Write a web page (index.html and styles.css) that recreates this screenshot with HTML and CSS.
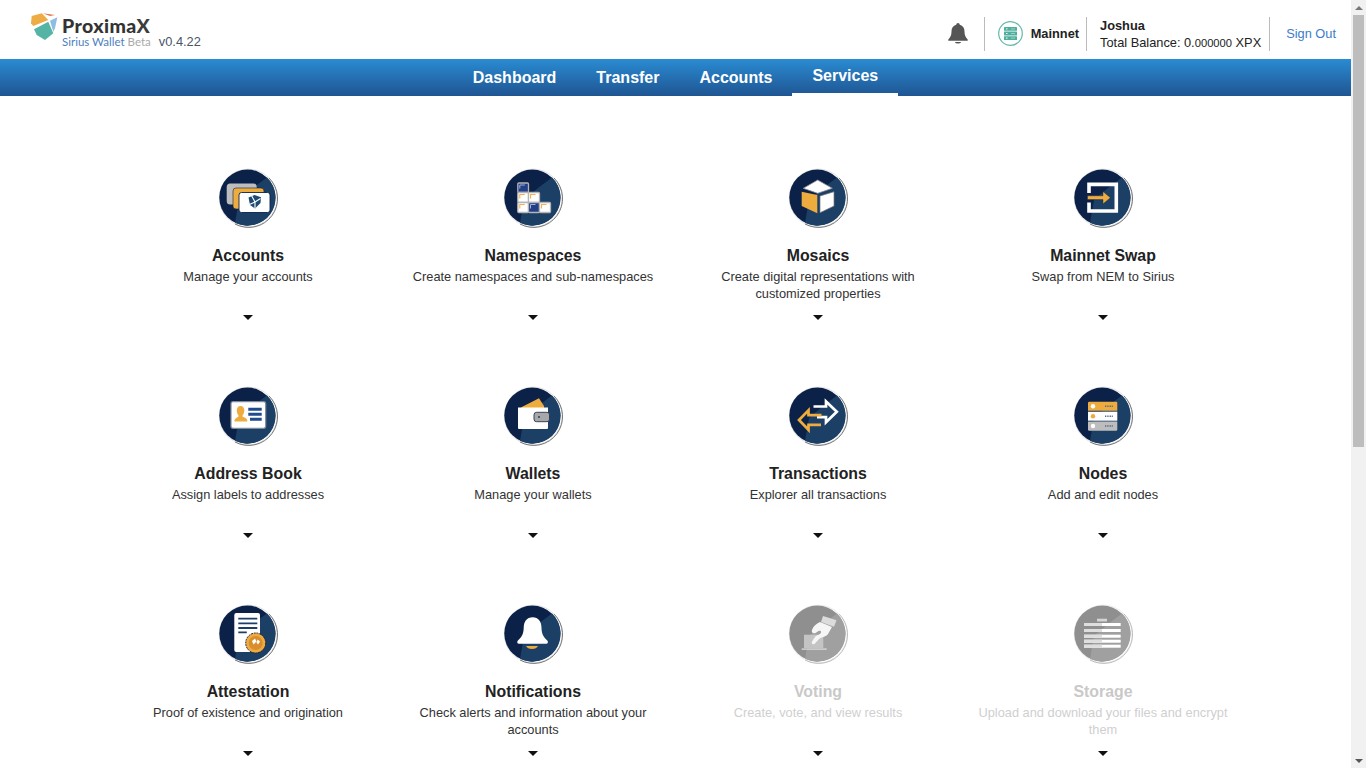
FILE: index.html
```html
<!DOCTYPE html>
<html lang="en">
<head>
<meta charset="utf-8">
<title>ProximaX Sirius Wallet</title>
<link rel="stylesheet" href="styles.css">
</head>
<body>
<svg class="defs" aria-hidden="true">
  <symbol id="b" viewBox="-1 -1 60 60">
    <circle cx="29.200" cy="29" r="28.900" fill="#fff" stroke="#cfcfcf" stroke-width=".6"/>
    <path d="M50 9A28.900 28.900 0 0 1 16 55" fill="none" stroke="#666" stroke-width=".9"/>
    <circle cx="28.300" cy="28.500" r="28" fill="#0c2148"/>
    <path d="M16 53.700L20 31Q33 19 48 8.500A28 28 0 0 1 16 53.700Z" fill="#1c3f66"/>
  </symbol>
  <symbol id="g" viewBox="-1 -1 60 60">
    <circle cx="29.200" cy="29" r="28.900" fill="#fff" stroke="#dedede" stroke-width=".6"/>
    <path d="M50 9A28.900 28.900 0 0 1 16 55" fill="none" stroke="#b5b5b5" stroke-width=".9"/>
    <circle cx="28.300" cy="28.500" r="28" fill="#8f8f8f"/>
    <path d="M16 53.700L20 31Q33 19 48 8.500A28 28 0 0 1 16 53.700Z" fill="#a0a0a0"/>
  </symbol>
</svg>

<header class="top">
  <div class="brand">
    <svg class="logo" viewBox="0 0 28 28">
      <path d="M1.700 4L11.700 1.300 18.300 8 3.300 14 1 11.300z" fill="#eeac45"/>
      <path d="M12.700 1.300L25 3l-5 1z" fill="#e4734a"/>
      <path d="M20 8.700L27.300 5.300 25 16.300 23.300 19.700z" fill="#8fbce2"/>
      <path d="M4 17.300L18.300 9.700 23.300 21.300 15 28 6.700 23z" fill="#55b5a5"/>
    </svg>
    <div class="wordmark">
      <div class="name">Proxima<span class="name-x">X</span></div>
      <div class="sub"><span class="sub-blue">Sirius Wallet</span> <span class="sub-grey">Beta</span></div>
    </div>
    <span class="version">v0.4.22</span>
  </div>
  <div class="tools">
    <div class="tool tool-bell">
      <svg class="bell" viewBox="0 0 20 21"><path d="M10 0a1.800 1.800 0 0 1 1.800 1.700C15 2.500 16.500 5 16.500 8.500c0 4 1 5.500 3.200 8v1.300H.3v-1.300c2.200-2.500 3.200-4 3.200-8C3.500 5 5 2.500 8.200 1.700A1.800 1.800 0 0 1 10 0z" fill="#555"/><path d="M6.800 19h6.400a3.300 2 0 0 1-6.400 0z" fill="#555"/></svg>
    </div>
    <div class="tool tool-net">
      <svg class="net" viewBox="0 0 25 25">
        <circle cx="12.500" cy="12.500" r="11.800" fill="#fff" stroke="#62b9a9" stroke-width="1.200"/>
        <rect x="6" y="6" width="13" height="3.800" rx=".5" fill="#4fae9d"/>
        <rect x="6" y="10.600" width="13" height="3.800" rx=".5" fill="#4fae9d"/>
        <rect x="6" y="15.200" width="13" height="3.800" rx=".5" fill="#4fae9d"/>
        <path d="M8 7.900h1.500M8 12.500h1.500M8 17.100h1.500" stroke="#fff"/>
        <path d="M13 7.900h4M13 12.500h4M13 17.100h4" stroke="#a8dcd2" stroke-width=".8"/>
      </svg>
      <span class="net-name">Mainnet</span>
    </div>
    <div class="tool tool-acct">
      <div class="acct-name">Joshua</div>
      <div class="acct-bal">Total Balance: 0.<span class="dec">000000</span> XPX</div>
    </div>
    <div class="tool tool-out"><a class="signout" href="#">Sign Out</a></div>
  </div>
</header>

<nav class="nav">
  <a class="nav-item" href="#">Dashboard</a>
  <a class="nav-item" href="#">Transfer</a>
  <a class="nav-item" href="#">Accounts</a>
  <a class="nav-item nav-active" href="#">Services</a>
</nav>

<main class="grid">
  <section class="card">
    <svg class="ic" viewBox="-1 -1 60 60"><use href="#b" x="-1" y="-1" width="60" height="60"/>
      <rect x="7.700" y="14.500" width="30" height="21" rx="3.500" fill="#bdbdbd"/>
      <rect x="14" y="19" width="31" height="21" rx="3" fill="#eeac3f" stroke="#0c2148" stroke-width=".6"/>
      <rect x="20" y="23.500" width="31" height="20" rx="2.500" fill="#fff" stroke="#0c2148" stroke-width=".9"/>
      <path d="M29.500 28.500l6-2.500 6.500 2.300-.5 5.700-5.500 5.500-5-3.500z" fill="#1c4a72"/>
      <path d="M32.500 26.500l3.500 6.500-5.500 2.500M36 33l5.500-3.500M36 33v6" stroke="#fff" stroke-width="1.100" fill="none"/>
    </svg>
    <h2 class="title">Accounts</h2>
    <p class="desc">Manage your accounts</p>
    <span class="caret"></span>
  </section>

  <section class="card">
    <svg class="ic" viewBox="-1 -1 60 60"><use href="#b" x="-1" y="-1" width="60" height="60"/>
      <g stroke="#b4b4b4" stroke-width="1.300">
        <rect x="13.800" y="14" width="10.700" height="9.500" rx="1" fill="#233f86"/>
        <rect x="13.800" y="23.500" width="10.700" height="10" rx="1" fill="#fff"/>
        <rect x="24.500" y="23.500" width="11" height="10" rx="1" fill="#fff"/>
        <rect x="13.800" y="33.500" width="10.700" height="10" rx="1" fill="#fff"/>
        <rect x="24.500" y="33.500" width="11" height="10" rx="1" fill="#233f86"/>
        <rect x="35.500" y="33.500" width="11" height="10" rx="1" fill="#fff"/>
      </g>
      <path d="M15.800 29.500v-4h5M26.500 29.500v-4h5M15.800 39.500v-4h5M37.500 39.500v-4h5" stroke="#f3b04c" stroke-width="1.100" fill="none"/>
      <path d="M15.800 19.500v-3.500h5M26.500 39.500v-4h5" stroke="#9db2dc" stroke-width="1" fill="none"/>
    </svg>
    <h2 class="title">Namespaces</h2>
    <p class="desc">Create namespaces and sub-namespaces</p>
    <span class="caret"></span>
  </section>

  <section class="card">
    <svg class="ic" viewBox="-1 -1 60 60"><use href="#b" x="-1" y="-1" width="60" height="60"/>
      <path d="M28.700 11l14.600 8.300-14.600 5-14.400-5z" fill="#fff" stroke="#8a8f9a" stroke-width=".8"/>
      <path d="M12.700 22.700L28.300 26v18.300L12.700 37z" fill="#eeac3f"/>
      <path d="M31 27l14-4.300V37l-14 6.700z" fill="#fff" stroke="#777" stroke-width=".7"/>
    </svg>
    <h2 class="title">Mosaics</h2>
    <p class="desc">Create digital representations with customized properties</p>
    <span class="caret"></span>
  </section>

  <section class="card">
    <svg class="ic" viewBox="-1 -1 60 60"><use href="#b" x="-1" y="-1" width="60" height="60"/>
      <path d="M15 24v-8.600h27.300v26.600H15V33.500" fill="none" stroke="#fff" stroke-width="3.600"/>
      <path d="M13.500 26.800H29V22.500l7.400 6.200L29 34.900V30.600H13.500z" fill="#eeac3f" stroke="#0c2148" stroke-width=".4"/>
    </svg>
    <h2 class="title">Mainnet Swap</h2>
    <p class="desc">Swap from NEM to Sirius</p>
    <span class="caret"></span>
  </section>

  <section class="card">
    <svg class="ic" viewBox="-1 -1 60 60"><use href="#b" x="-1" y="-1" width="60" height="60"/>
      <rect x="12" y="14.700" width="34.700" height="26.600" rx="2" fill="#fff" stroke="#7f8a9c" stroke-width="1.200"/>
      <path d="M21.500 19c2.600 0 3.800 2 3.800 4.500 0 2.300-1 3.800-1.700 4.800v1.500c2 .7 4.200 1.400 4.700 3.700.1.800-.2 1-.8 1H16.200c-.7 0-1-.4-.8-1.100.7-2.200 2.800-2.900 4-3.600v-1.500c-.7-1-1.600-2.400-1.600-4.800 0-2.500 1.200-4.500 3.700-4.500z" fill="#eeac3f"/>
      <path d="M29.300 22.300h13.400M29.300 27.300h13.400M31 32.300h11.700" stroke="#1f4a8c" stroke-width="2.900"/>
    </svg>
    <h2 class="title">Address Book</h2>
    <p class="desc">Assign labels to addresses</p>
    <span class="caret"></span>
  </section>

  <section class="card">
    <svg class="ic" viewBox="-1 -1 60 60"><use href="#b" x="-1" y="-1" width="60" height="60"/>
      <path d="M17.300 20.300L35 11.300l5 7.700v2H17.300z" fill="#eeac3f"/>
      <path d="M14 20.500h30V41a1 1 0 0 1-1 1H15a1 1 0 0 1-1-1z" fill="#fff"/>
      <rect x="30" y="25.300" width="15.500" height="9.400" rx="2.500" fill="#a8a8a8" stroke="#26364f" stroke-width=".9"/>
      <circle cx="35" cy="30" r="1" fill="#1c3f66"/>
    </svg>
    <h2 class="title">Wallets</h2>
    <p class="desc">Manage your wallets</p>
    <span class="caret"></span>
  </section>

  <section class="card">
    <svg class="ic" viewBox="-1 -1 60 60"><use href="#b" x="-1" y="-1" width="60" height="60"/>
      <path d="M24.500 19.500H37V14.500L47.800 24.700 37 35.200V30.200H28" fill="none" stroke="#fff" stroke-width="2.700"/>
      <path d="M32.500 28.200H19.500V23.300L10 33l9.500 9.800V37.800H32" fill="none" stroke="#eeac3f" stroke-width="2.700"/>
    </svg>
    <h2 class="title">Transactions</h2>
    <p class="desc">Explorer all transactions</p>
    <span class="caret"></span>
  </section>

  <section class="card">
    <svg class="ic" viewBox="-1 -1 60 60"><use href="#b" x="-1" y="-1" width="60" height="60"/>
      <path d="M14 16a1.300 1.300 0 0 1 1.300-1.300h26.700a1.300 1.300 0 0 1 1.300 1.300v7.700H14z" fill="#eeac3f"/>
      <rect x="14" y="24.700" width="29.300" height="9" fill="#fff"/>
      <path d="M14 34.400h29.300v8a1.300 1.300 0 0 1-1.300 1.300H15.300A1.300 1.300 0 0 1 14 42.400z" fill="#bdbdbd"/>
      <circle cx="19" cy="19.200" r="2.200" fill="#fff"/>
      <circle cx="19" cy="29.200" r="2.200" fill="#eeac3f"/>
      <circle cx="19" cy="39" r="2.200" fill="#fff"/>
      <path d="M31 19.200h8M31 29.200h8M31 39h8" stroke="#4c6a8c" stroke-width="1.500" stroke-dasharray="1 .7"/>
    </svg>
    <h2 class="title">Nodes</h2>
    <p class="desc">Add and edit nodes</p>
    <span class="caret"></span>
  </section>

  <section class="card">
    <svg class="ic" viewBox="-1 -1 60 60"><use href="#b" x="-1" y="-1" width="60" height="60"/>
      <rect x="15.300" y="8" width="25.700" height="39" rx="2" fill="#fff"/>
      <path d="M19.300 13.700h19M19.300 18.300h19M19.300 23h19M19.300 27.300h8.500" stroke="#1c3f66" stroke-width="1.800"/>
      <circle cx="36.700" cy="38" r="10" fill="#eeac3f" stroke="#26283a" stroke-width="1" stroke-dasharray="2 .8"/>
      <circle cx="36.700" cy="38" r="7" fill="#d98d2d"/>
      <path d="M33 36l3-2.500 1.500 3-3 3zM38.500 34.500l2.500 2-2 3-1.500-2z" fill="#fff"/>
    </svg>
    <h2 class="title">Attestation</h2>
    <p class="desc">Proof of existence and origination</p>
    <span class="caret"></span>
  </section>

  <section class="card">
    <svg class="ic" viewBox="-1 -1 60 60"><use href="#b" x="-1" y="-1" width="60" height="60"/>
      <path d="M28.700 12.300c5.800 0 8.800 4.500 8.800 10.500 0 6.500 2.500 10 6 13 .8.800.5 3-1.200 3H15c-1.800 0-2.200-2-1.300-3 3.500-3 6-6.500 6-13 0-6 3-10.500 9-10.500z" fill="#fff"/>
      <path d="M22 41h12c-1 2-3 3-6 3s-5-1-6-3z" fill="#eeac3f"/>
    </svg>
    <h2 class="title">Notifications</h2>
    <p class="desc">Check alerts and information about your accounts</p>
    <span class="caret"></span>
  </section>

  <section class="card card-off">
    <svg class="ic" viewBox="-1 -1 60 60"><use href="#g" x="-1" y="-1" width="60" height="60"/>
      <path d="M15 29.700h19.300V43H15z" fill="#c4c4c4"/>
      <path d="M12.700 43.400h25v1.400h-25z" fill="#d8d8d8"/>
      <path d="M34 11l13.500 4.300-2.500 6.500L32 17z" fill="#dcdcdc"/>
      <path d="M31 17l12 5-4 7c-2 3-6 3-8.500 4.500l-5 5.500c-1.500 1-3.500-.5-2.500-2.500l3-4.500c1.500-2.500 5-1.500 6-4.500.5-1.500-1-2-2.500-1.500l-3 2c-2 1-4.500-.500-3.500-3 1.500-4 4-6 8-8z" fill="#f6f6f6"/>
    </svg>
    <h2 class="title">Voting</h2>
    <p class="desc">Create, vote, and view results</p>
    <span class="caret"></span>
  </section>

  <section class="card card-off">
    <svg class="ic" viewBox="-1 -1 60 60"><use href="#g" x="-1" y="-1" width="60" height="60"/>
      <rect x="23" y="13.700" width="10" height="2.800" fill="#d4d4d4"/>
      <g fill="#fff">
        <rect x="10" y="18" width="36.700" height="3"/>
        <rect x="10" y="24" width="36.700" height="3"/>
        <rect x="10" y="29.700" width="36.700" height="3"/>
        <rect x="10" y="34.700" width="36.700" height="3"/>
        <rect x="10" y="39.700" width="36.700" height="3"/>
      </g>
      <g fill="#dedede">
        <rect x="10" y="18" width="18" height="3"/>
        <rect x="10" y="24" width="18" height="3"/>
        <rect x="10" y="29.700" width="18" height="3"/>
        <rect x="10" y="34.700" width="18" height="3"/>
        <rect x="10" y="39.700" width="18" height="3"/>
      </g>
    </svg>
    <h2 class="title">Storage</h2>
    <p class="desc">Upload and download your files and encrypt them</p>
    <span class="caret"></span>
  </section>
</main>

<aside class="scrollbar" aria-hidden="true">
  <span class="sb-btn"><span class="sb-up"></span></span>
  <span class="sb-thumb"></span>
  <span class="sb-btn"><span class="sb-down"></span></span>
</aside>
</body>
</html>
```

FILE: styles.css
```css
* { box-sizing: border-box; }
body {
  margin: 0;
  padding-right: 15px;
  background: #fff;
  color: #222;
  font-family: "Liberation Sans", Arial, sans-serif;
  font-size: 12.800px;
}
.defs { display: none; }

.scrollbar {
  position: fixed;
  top: 0;
  right: 0;
  bottom: 0;
  width: 15px;
  display: flex;
  flex-direction: column;
  align-items: center;
  justify-content: space-between;
  background: #f1f1f1;
}
.sb-btn {
  display: flex;
  align-items: center;
  justify-content: center;
  width: 15px;
  height: 15px;
}
.sb-up, .sb-down {
  width: 0;
  height: 0;
  border-left: 4px solid transparent;
  border-right: 4px solid transparent;
}
.sb-up { border-bottom: 4px solid #777; }
.sb-down { border-top: 4px solid #555; }
.sb-thumb {
  width: 11px;
  height: 432px;
  margin-bottom: auto;
  background: #bdbdbd;
}

.top {
  display: flex;
  justify-content: space-between;
  height: 59px;
}
.brand {
  display: flex;
  align-items: flex-start;
  padding: 12px 0 0 30px;
}
.logo { width: 28px; height: 28px; flex: none; }
.wordmark { margin: 5px 0 0 4px; }
.name {
  font-family: Lato, sans-serif;
  font-weight: 900;
  font-size: 19.500px;
  line-height: 18px;
  letter-spacing: .4px;
  color: #333;
}
.name-x { color: #3c3c3c; }
.sub {
  font-family: Lato, sans-serif;
  font-size: 11.500px;
  line-height: 12px;
  white-space: nowrap;
  margin-top: 1px;
}
.sub-blue { color: #4f7fc0; }
.sub-grey { color: #a9a9a9; }
.version {
  margin: 23px 0 0 8px;
  font-size: 12.800px;
  line-height: 14px;
  color: #4a5568;
}

.tools {
  display: flex;
  align-items: flex-start;
  padding-top: 17px;
}
.tool {
  display: flex;
  align-items: center;
  height: 34px;
}
.tool-bell { padding: 0 16px 1px 0; }
.bell { width: 20px; height: 21px; }
.tool-net { border-left: 1px solid #bbb; padding: 0 7px 2px 13px; }
.net { width: 25px; height: 25px; margin-right: 8px; }
.net-name { font-weight: 700; }
.tool-acct {
  display: block;
  border-left: 1px solid #bbb;
  padding: 0 8px 0 13px;
  line-height: 17px;
}
.acct-name { font-weight: 700; }
.dec { font-size: 11.200px; }
.tool-out { border-left: 1px solid #bbb; padding: 0 15px 2px 16px; }
.signout { color: #3d7cc9; text-decoration: none; }

.nav {
  display: flex;
  justify-content: center;
  height: 37px;
  background: linear-gradient(#2a8bd2, #1f5592);
}
.nav-item {
  padding: 0 20px;
  color: #fff;
  font-weight: 700;
  font-size: 16px;
  line-height: 37px;
  text-decoration: none;
}
.nav-active {
  line-height: 33px;
  height: 37px;
  border-bottom: 3px solid #fff;
}

.grid {
  display: grid;
  grid-template-columns: repeat(4, 285px);
  grid-auto-rows: 218px;
  justify-content: center;
  padding-top: 72px;
}
.card {
  display: flex;
  flex-direction: column;
  align-items: center;
  padding: 0 15px;
  text-align: center;
}
.ic { width: 60px; height: 60px; flex: none; }
.title {
  margin: 19px 0 0;
  font-size: 15.850px;
  font-weight: 700;
  line-height: 18px;
  color: #222;
}
.desc {
  margin: 3px 0 0;
  min-height: 34px;
  line-height: 17px;
  color: #333;
}
.caret {
  margin-top: 13px;
  width: 0;
  height: 0;
  border-left: 5px solid transparent;
  border-right: 5px solid transparent;
  border-top: 5px solid #111;
}
.card-off .title { color: #c9c9c9; }
.card-off .desc { color: #cfcfcf; }
```
